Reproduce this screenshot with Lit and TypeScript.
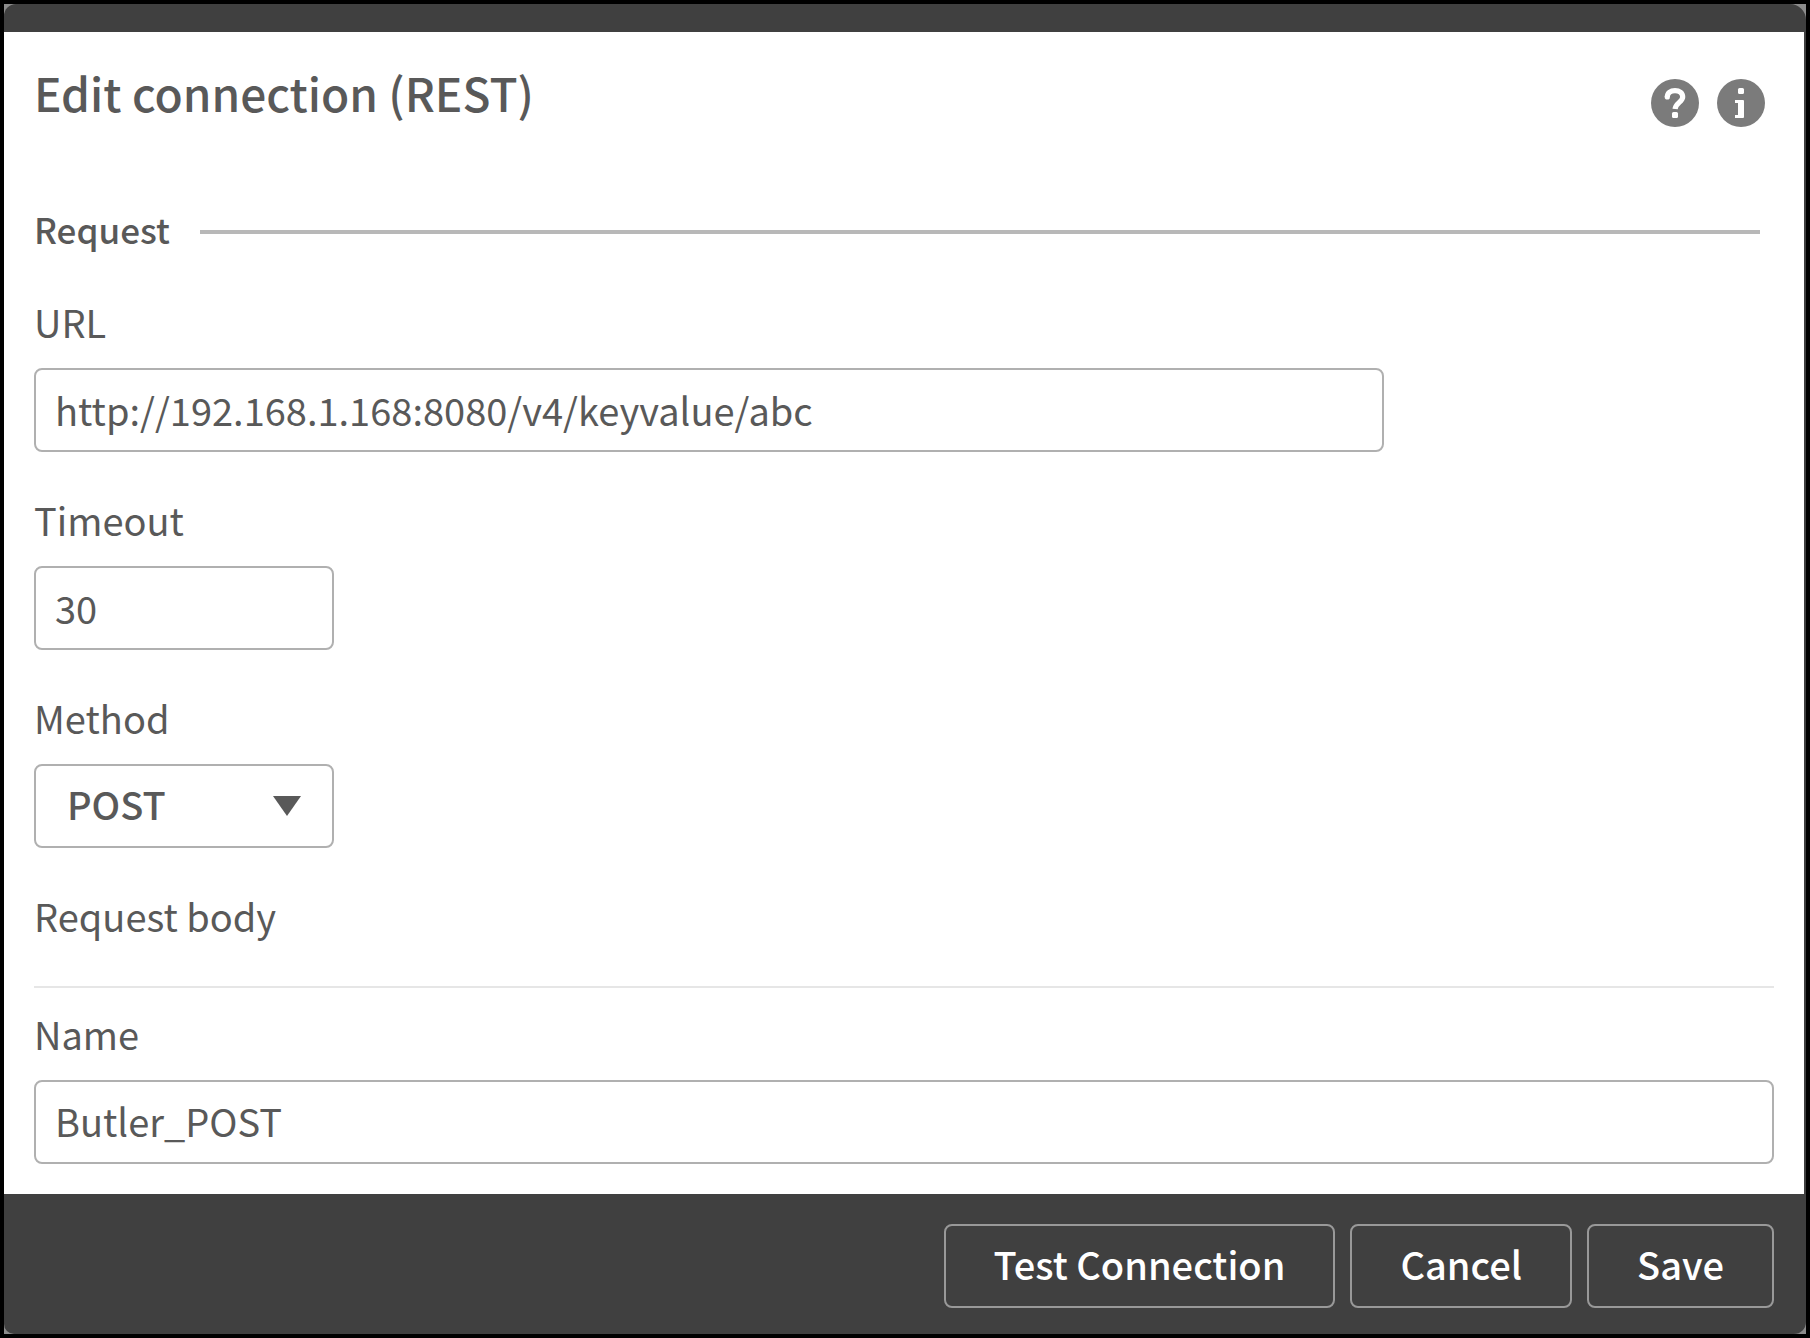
import { LitElement, html, css } from "lit";
import { customElement, state } from "lit/decorators.js";

@customElement("app-root")
export class AppRoot extends LitElement {
  static styles = css`
    :host {
      display: block;
      --ink: #595959;
      --line: #b0b0b0;
      --bar: #404040;
      font-family: "Noto Sans CJK SC", "Noto Sans", sans-serif;
      font-size: 38px;
      line-height: 48px;
      color: var(--ink);
    }
    * {
      box-sizing: border-box;
    }
    .backdrop {
      display: flex;
      min-height: 100vh;
      border: 4px solid #000;
      background: #8c8c8c;
    }
    .dialog {
      flex: 1;
      min-width: 0;
      display: flex;
      flex-direction: column;
      padding: 28px 2px 0 0;
      border-radius: 12px 16px 12px 10px;
      background: var(--bar);
      overflow: hidden;
    }
    .content {
      flex: 1;
      padding: 32px 30px 30px;
      background: #fff;
    }
    .header {
      display: flex;
      justify-content: space-between;
      align-items: flex-start;
      padding: 0 9px 0 0;
    }
    .title {
      margin: 0;
      font-size: 46px;
      line-height: 56px;
      font-weight: 500;
    }
    .tools {
      display: flex;
      gap: 18px;
      padding-top: 15px;
    }
    .tool {
      display: block;
      width: 48px;
      height: 48px;
      padding: 0;
      border: 0;
      border-radius: 50%;
      background: none;
    }
    .icon {
      display: block;
      width: 48px;
      height: 48px;
    }
    .section {
      display: flex;
      align-items: center;
      gap: 30px;
      margin-top: 78px;
      padding-right: 14px;
    }
    .section-title {
      margin: 0;
      font-size: 35px;
      line-height: 48px;
      font-weight: 500;
    }
    .rule {
      flex: 1;
      height: 4px;
      margin: 6px 0 0;
      border: 0;
      background: #b8b8b8;
    }
    .fields {
      display: grid;
      gap: 44px;
      margin-top: 45px;
    }
    .field {
      display: grid;
      gap: 22px;
      justify-items: start;
    }
    .label {
      display: block;
    }
    .input,
    .select {
      display: block;
      width: 100%;
      height: 84px;
      margin: 0;
      padding: 0 19px 2px;
      border: 2px solid var(--line);
      border-radius: 8px;
      background: #fff;
      color: var(--ink);
      font: inherit;
    }
    .url {
      max-width: 1350px;
    }
    .short {
      max-width: 300px;
    }
    .picker {
      display: grid;
      width: 100%;
      align-items: center;
    }
    .select {
      grid-area: 1 / 1;
      padding: 0 60px 4px 31px;
      appearance: none;
      font-weight: 500;
    }
    .arrow {
      grid-area: 1 / 1;
      justify-self: end;
      width: 28px;
      height: 20px;
      margin-right: 33px;
      pointer-events: none;
    }
    .divider {
      height: 2px;
      margin: 46px 0 22px;
      border: 0;
      background: #e6e6e6;
    }
    .name {
      padding-bottom: 4px;
    }
    .footer {
      display: flex;
      justify-content: flex-end;
      gap: 15px;
      padding: 30px 30px 26px;
    }
    .button {
      height: 84px;
      padding: 0 48px 4px;
      border: 2px solid #999;
      border-radius: 8px;
      background: transparent;
      color: #fff;
      font: inherit;
      font-weight: 500;
    }
  `;

  @state() private url = "http://192.168.1.168:8080/v4/keyvalue/abc";
  @state() private timeout = "30";
  @state() private name = "Butler_POST";

  render() {
    return html`
      <div class="backdrop">
        <main class="dialog">
          <div class="content">
            <header class="header">
              <h1 class="title">Edit connection (REST)</h1>
              <div class="tools">
                <button class="tool" type="button" aria-label="Help">
                  <svg class="icon" viewBox="0 0 48 48" aria-hidden="true">
                    <circle cx="24" cy="24" r="24" fill="#7b7b7b" />
                    <path
                      d="M16.3 18C16.3 14 19.5 11.6 24 11.6S31.7 14 31.7 18C31.7 22.8 24.4 24 24.1 30"
                      fill="none"
                      stroke="#fff"
                      stroke-width="5.2"
                    />
                    <circle cx="16.3" cy="18" r="2.6" fill="#fff" />
                    <rect x="21" y="33" width="6" height="6" rx="1.5" fill="#fff" />
                  </svg>
                </button>
                <button class="tool" type="button" aria-label="Information">
                  <svg class="icon" viewBox="0 0 48 48" aria-hidden="true">
                    <circle cx="24" cy="24" r="24" fill="#7b7b7b" />
                    <rect x="21" y="9" width="6" height="6" rx="1.5" fill="#fff" />
                    <path d="M18 21H26Q27 21 27 22V38Q27 39 26 39H18V36H21V24H18Z" fill="#fff" />
                  </svg>
                </button>
              </div>
            </header>

            <div class="section">
              <h2 class="section-title">Request</h2>
              <hr class="rule" />
            </div>

            <div class="fields">
              <div class="field">
                <label class="label" for="url">URL</label>
                <input class="input url" id="url" type="text" .value=${this.url} />
              </div>
              <div class="field">
                <label class="label" for="timeout">Timeout</label>
                <input class="input short" id="timeout" type="text" inputmode="numeric" .value=${this.timeout} />
              </div>
              <div class="field">
                <label class="label" for="method">Method</label>
                <div class="picker short">
                  <select class="select" id="method">
                    <option selected>POST</option>
                  </select>
                  <svg class="arrow" viewBox="0 0 28 20" aria-hidden="true">
                    <path d="M0 0H28L14 20Z" fill="#595959" />
                  </svg>
                </div>
              </div>
              <div class="field">
                <span class="label">Request body</span>
              </div>
            </div>

            <hr class="divider" />

            <div class="field">
              <label class="label" for="name">Name</label>
              <input class="input name" id="name" type="text" .value=${this.name} />
            </div>
          </div>

          <footer class="footer">
            <button class="button" type="button">Test Connection</button>
            <button class="button" type="button">Cancel</button>
            <button class="button" type="button">Save</button>
          </footer>
        </main>
      </div>
    `;
  }
}
